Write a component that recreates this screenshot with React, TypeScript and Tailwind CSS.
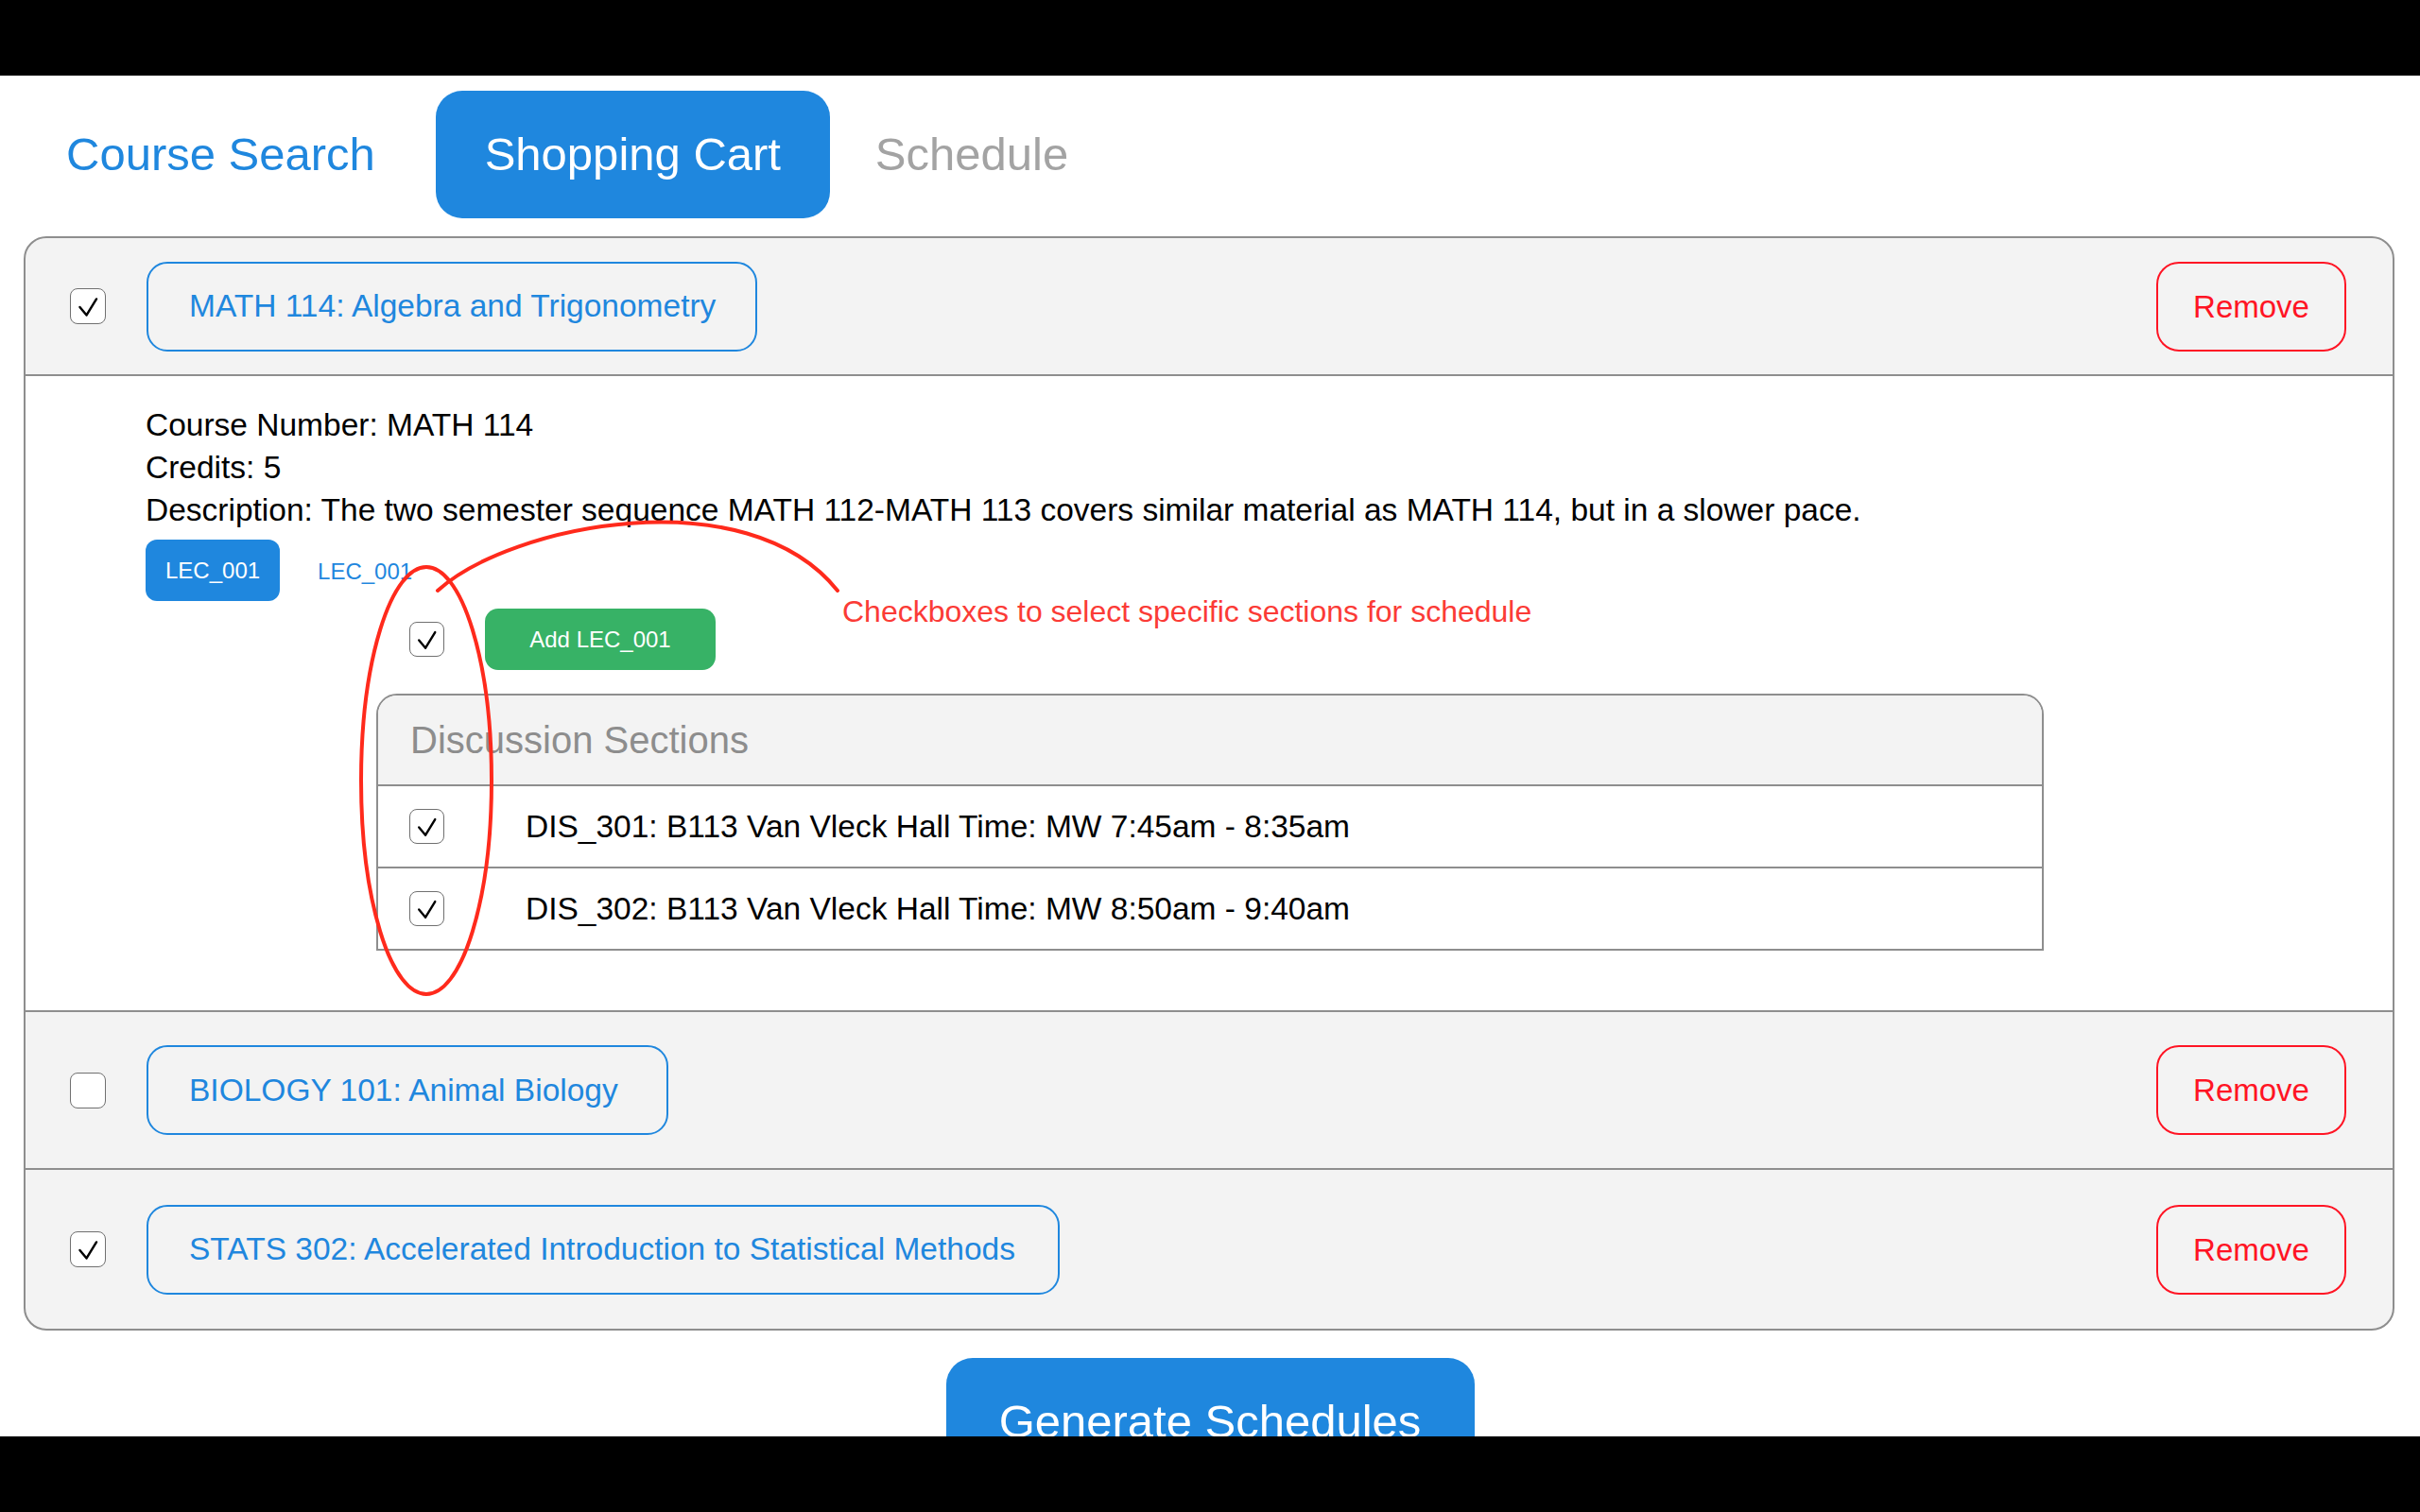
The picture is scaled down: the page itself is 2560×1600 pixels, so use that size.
import React from "react";

type Course = {
  name: string;
  checked: boolean;
  rowClass: string;
  btnClass: string;
  expanded?: boolean;
};

const courses: Course[] = [
  { name: "MATH 114: Algebra and Trigonometry", checked: true, rowClass: "h-[144px]", btnClass: "w-[646px]", expanded: true },
  { name: "BIOLOGY 101: Animal Biology", checked: false, rowClass: "h-[167px] border-t-2 border-[#8e8e8e]", btnClass: "w-[552px]" },
  {
    name: "STATS 302: Accelerated Introduction to Statistical Methods",
    checked: true,
    rowClass: "h-[170px] border-t-2 border-[#8e8e8e]",
    btnClass: "w-[966px]",
  },
];

const sections = [
  "DIS_301: B113 Van Vleck Hall Time: MW 7:45am - 8:35am",
  "DIS_302: B113 Van Vleck Hall Time: MW 8:50am - 9:40am",
];

const CheckBox = ({ checked, small }: { checked: boolean; small?: boolean }) => (
  <span
    className={
      small
        ? "flex h-[37px] w-[37px] shrink-0 items-center justify-center rounded-[8px] border-[1.5px] border-[#707070] bg-white"
        : "flex h-[38px] w-[38px] shrink-0 items-center justify-center rounded-[8px] border-[1.5px] border-[#707070] bg-white"
    }
  >
    {checked && (
      <svg viewBox="0 0 38 38" className="h-full w-full">
        <path d="M10 20 L17.5 29 L28.5 11" fill="none" stroke="#000" strokeWidth="2.6" strokeLinecap="round" strokeLinejoin="round" />
      </svg>
    )}
  </span>
);

const CourseDetails = () => (
  <div className="border-t-2 border-[#8e8e8e] bg-white pb-[63px] pl-[127px] pt-[29px] text-[33.5px] leading-[45px] text-black">
    <p>Course Number: MATH 114</p>
    <p>Credits: 5</p>
    <p>
      Description: The two semester sequence MATH 112-MATH 113 covers similar material as MATH 114, but in a slower pace.
    </p>

    {/* lecture tabs */}
    <div className="mt-[9px] flex items-center">
      <button className="h-[65px] rounded-[12px] bg-[#1f87de] px-[21px] text-[24px] leading-none text-white">LEC_001</button>
      <span className="ml-[40px] pt-[3px] text-[24px] leading-none text-[#1f87de]">LEC_001</span>
    </div>

    <div className="ml-[279px] mt-[8px] flex items-center">
      <CheckBox checked small />
      <button className="ml-[43px] h-[65px] w-[244px] rounded-[14px] bg-[#37b266] text-[24px] leading-none text-white">
        Add LEC_001
      </button>
    </div>

    <div className="ml-[244px] mt-[25px] w-[1764px] overflow-hidden rounded-t-[22px] border-2 border-[#8e8e8e]">
      <div className="flex h-[94px] items-center bg-[#f3f3f3] pl-[34px] text-[40px] leading-none text-[#8d8d8d]">
        Discussion Sections
      </div>
      {sections.map((s) => (
        <div key={s} className="flex h-[87px] items-center border-t-2 border-[#8e8e8e] pl-[33px]">
          <CheckBox checked small />
          <span className="ml-[86px] leading-none">{s}</span>
        </div>
      ))}
    </div>
  </div>
);

export default function App() {
  return (
    <div className="relative flex h-[1600px] w-[2560px] flex-col overflow-hidden bg-white font-['Liberation_Sans',Arial,sans-serif]">
      <div className="h-[80px] shrink-0 bg-black" />

      <main className="h-[1440px] shrink-0 overflow-hidden">
        <nav className="flex items-center pl-[22px] pt-[16px]">
          <button className="h-[135px] px-[48px] text-[49px] text-[#1f87de]">Course Search</button>
          <button className="ml-[16px] h-[135px] w-[417px] rounded-[28px] bg-[#1f87de] text-[49px] text-white">
            Shopping Cart
          </button>
          <button className="h-[135px] px-[48px] text-[49px] text-[#a3a3a3]">Schedule</button>
        </nav>

        <section className="ml-[25px] mt-[19px] w-[2508px] overflow-hidden rounded-[24px] border-2 border-[#8e8e8e] bg-[#f3f3f3]">
          {courses.map((c) => (
            <div key={c.name}>
              <div className={`flex items-center pl-[47px] pr-[49px] ${c.rowClass}`}>
                <CheckBox checked={c.checked} />
                <button
                  className={`ml-[43px] h-[95px] rounded-[22px] border-2 border-[#1f87de] pl-[43px] text-left text-[33.5px] leading-none text-[#1f87de] ${c.btnClass}`}
                >
                  {c.name}
                </button>
                <button className="ml-auto h-[95px] w-[201px] rounded-[24px] border-2 border-[#ff1424] text-[33px] leading-none text-[#ff1424]">
                  Remove
                </button>
              </div>
              {c.expanded && <CourseDetails />}
            </div>
          ))}
        </section>

        <div className="mt-[29px] flex justify-center">
          <button className="h-[135px] w-[559px] rounded-[28px] bg-[#1f87de] text-[49px] text-white">Generate Schedules</button>
        </div>
      </main>

      <div className="h-[80px] shrink-0 bg-black" />

      {/* annotation drawn over the screenshot */}
      <svg className="pointer-events-none absolute left-0 top-0 h-[1600px] w-[2560px]" viewBox="0 0 2560 1600">
        <ellipse cx="451" cy="826" rx="69" ry="226" fill="none" stroke="#ff2a1c" strokeWidth="4" />
        <path d="M463 625 C540 555 790 505 886 625" fill="none" stroke="#ff2a1c" strokeWidth="4" strokeLinecap="round" />
      </svg>
      <span className="absolute left-[891px] top-[631px] text-[32px] leading-[32px] text-[#fb3b36]">
        Checkboxes to select specific sections for schedule
      </span>
    </div>
  );
}
